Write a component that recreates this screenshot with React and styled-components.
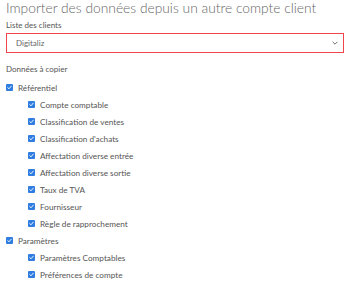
import React from "react";
import styled, { createGlobalStyle } from "styled-components";

const GlobalStyle = createGlobalStyle`
  html, body {
    margin: 0;
    padding: 0;
    background: #fff;
  }
  body {
    font-family: Lato, "Open Sans", sans-serif;
    color: #555;
  }
`;

const groups = [
  {
    label: "Référentiel",
    items: [
      "Compte comptable",
      "Classification de ventes",
      "Classification d'achats",
      "Affectation diverse entrée",
      "Affectation diverse sortie",
      "Taux de TVA",
      "Fournisseur",
      "Règle de rapprochement",
    ],
  },
  {
    label: "Paramètres",
    items: ["Paramètres Comptables", "Préférences de compte"],
  },
];

const Check = () => (
  <Box>
    <svg width="5" height="5" viewBox="0 0 10 10">
      <path
        d="M1.5 5.2 L4 7.6 L8.6 2.2"
        fill="none"
        stroke="#fff"
        strokeWidth="1.8"
        strokeLinecap="round"
        strokeLinejoin="round"
      />
    </svg>
  </Box>
);

const App = () => {
  return (
    <>
      <GlobalStyle />
      <Wrapper>
        <Title>Importer des données depuis un autre compte client</Title>
        <Label>Liste des clients</Label>
        <Select>
          <span>Digitaliz</span>
          <svg width="6" height="4" viewBox="0 0 10 6">
            <path d="M1 1 L5 5 L9 1" fill="none" stroke="#666" strokeWidth="1.6" />
          </svg>
        </Select>
        <Label $top={11}>Données à copier</Label>
        <List>
          {groups.map((g) => (
            <React.Fragment key={g.label}>
              <Row>
                <Check />
                <span>{g.label}</span>
              </Row>
              {g.items.map((it) => (
                <Row key={it} $nested>
                  <Check />
                  <span>{it}</span>
                </Row>
              ))}
            </React.Fragment>
          ))}
        </List>
      </Wrapper>
    </>
  );
};

const Wrapper = styled.div`
  padding: 0 4px 0 6px;
  width: 348px;
  box-sizing: border-box;
`;

const Title = styled.h1`
  margin: 0;
  font-size: 13.8px;
  font-weight: 300;
  line-height: 16px;
  color: #666;
  white-space: nowrap;
`;

const Label = styled.div`
  font-size: 8px;
  line-height: 10px;
  color: #555;
  margin-top: ${(p) => (p.$top ? p.$top : 4)}px;
`;

const Select = styled.div`
  margin-top: 3px;
  height: 20px;
  box-sizing: border-box;
  border: 1.5px solid #f0464b;
  display: flex;
  align-items: center;
  justify-content: space-between;
  padding: 0 5px 0 9px;
  font-size: 8px;
  color: #666;
`;

const List = styled.div`
  margin-top: 5px;
  display: flex;
  flex-direction: column;
`;

const Row = styled.div`
  display: flex;
  align-items: center;
  height: 17px;
  gap: 5px;
  padding-left: ${(p) => (p.$nested ? 22 : 0)}px;
  font-size: 8.2px;
  color: #555;
`;

const Box = styled.span`
  width: 7px;
  height: 7px;
  border-radius: 1px;
  background: #2f7de1;
  display: flex;
  align-items: center;
  justify-content: center;
  flex-shrink: 0;
`;

export default App;
